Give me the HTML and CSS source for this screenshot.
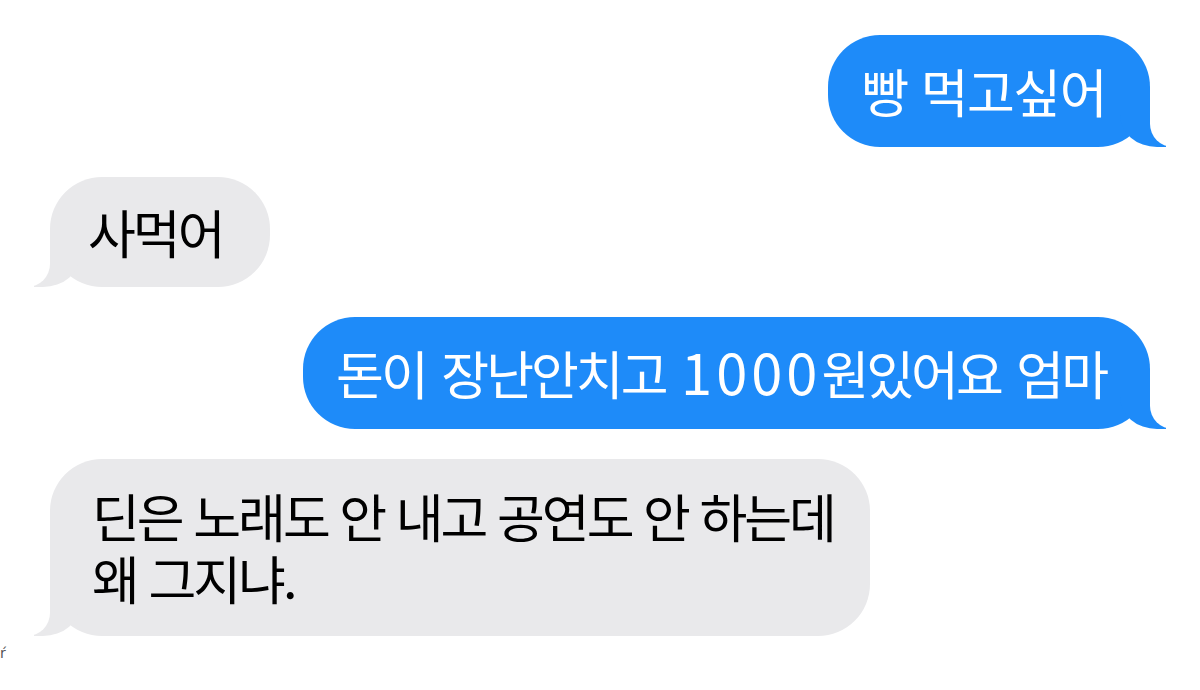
FILE: index.html
```html
<!DOCTYPE html>
<html lang="ko">
<head>
<meta charset="utf-8">
<link rel="stylesheet" href="styles.css">
</head>
<body>
<div class="chat">
  <div class="row out"><div class="bubble sent b1">빵 먹고싶어</div></div>
  <div class="row in"><div class="bubble recv b2">사먹어</div></div>
  <div class="row out"><div class="bubble sent b3">돈이 장난안치고 <span class="num">1000</span>원있어요 엄마</div></div>
  <div class="row in"><div class="bubble recv b4">딘은 노래도 안 내고 공연도 안 하는데<br>왜 그지냐.</div></div>
</div>
<span class="tick">ŕ</span>
</body>
</html>
```

FILE: styles.css
```css
html, body {
  margin: 0;
  padding: 0;
  background: #ffffff;
}
body {
  width: 1200px;
  height: 690px;
  overflow: hidden;
  position: relative;
  font-family: "Noto Sans CJK KR", "Noto Sans", sans-serif;
}
.chat {
  display: flex;
  flex-direction: column;
  gap: 30px;
  padding: 35px 50px 0 50px;
}
.row {
  display: flex;
}
.row.out { justify-content: flex-end; }
.row.in { justify-content: flex-start; }
.bubble {
  position: relative;
  font-size: 52px;
  line-height: 62px;
  letter-spacing: -3px;
  border-radius: 52px;
  white-space: nowrap;
}
.sent {
  background: #1e8bf9;
  color: #ffffff;
  padding: 25px 44px 25px 33px;
}
.recv {
  background: #e9e9eb;
  color: #000000;
  padding: 25px 47px 25px 38px;
}
.b1 {
  letter-spacing: -1.5px;
}
.b2 {
  padding-top: 24px;
  padding-bottom: 24px;
}
.b3 {
  word-spacing: 4px;
}
.b4 {
  padding: 26px 36px 27px 42px;
}
.num {
  font-size: 56px;
  line-height: 40px;
  letter-spacing: 4px;
  word-spacing: 0;
}
.sent::before,
.sent::after,
.recv::before,
.recv::after {
  content: "";
  position: absolute;
  bottom: 0;
  height: 58px;
}
.sent::before {
  right: -16px;
  width: 46px;
  background: #1e8bf9;
  border-bottom-left-radius: 37px 32px;
}
.sent::after {
  right: -60px;
  width: 60px;
  background: #ffffff;
  border-bottom-left-radius: 23px;
}
.recv::before {
  left: -16px;
  width: 46px;
  background: #e9e9eb;
  border-bottom-right-radius: 37px 32px;
}
.recv::after {
  left: -60px;
  width: 60px;
  background: #ffffff;
  border-bottom-right-radius: 23px;
}
.tick {
  position: absolute;
  left: 0;
  top: 645px;
  font-size: 14px;
  color: #555;
  font-family: "DejaVu Sans", sans-serif;
}
```
